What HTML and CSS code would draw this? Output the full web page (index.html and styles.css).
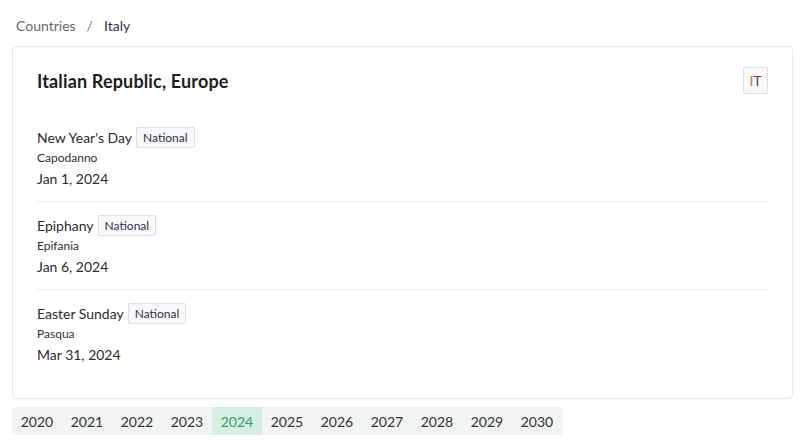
FILE: index.html
```html
<!DOCTYPE html>
<html>
<head>
<meta charset="utf-8">
<link rel="stylesheet" href="styles.css">
</head>
<body>
<div class="page">
  <nav class="crumbs">
    <span class="crumb-link">Countries</span>
    <span class="crumb-sep">/</span>
    <span class="crumb-current">Italy</span>
  </nav>
  <section class="card">
    <header class="card-head">
      <h1 class="title">Italian Republic, Europe</h1>
      <span class="flag"><span class="flag-i">I</span><span class="flag-t">T</span></span>
    </header>
    <ul class="holidays">
      <li class="holiday">
        <div class="name-row"><span class="name">New Year's Day</span><span class="tag">National</span></div>
        <div class="local">Capodanno</div>
        <div class="date">Jan 1, 2024</div>
      </li>
      <li class="holiday">
        <div class="name-row"><span class="name">Epiphany</span><span class="tag">National</span></div>
        <div class="local">Epifania</div>
        <div class="date">Jan 6, 2024</div>
      </li>
      <li class="holiday">
        <div class="name-row"><span class="name">Easter Sunday</span><span class="tag">National</span></div>
        <div class="local">Pasqua</div>
        <div class="date">Mar 31, 2024</div>
      </li>
    </ul>
  </section>
  <div class="years">
    <span class="year">2020</span>
    <span class="year">2021</span>
    <span class="year">2022</span>
    <span class="year">2023</span>
    <span class="year active">2024</span>
    <span class="year">2025</span>
    <span class="year">2026</span>
    <span class="year">2027</span>
    <span class="year">2028</span>
    <span class="year">2029</span>
    <span class="year">2030</span>
  </div>
</div>
</body>
</html>
```

FILE: styles.css
```css
* { box-sizing: border-box; }
body {
  margin: 0;
  background: #fff;
  font-family: Lato, "Noto Sans", sans-serif;
  color: #2a2a2a;
}
.page {
  padding: 14px 13px 0 12px;
}
.crumbs {
  display: flex;
  align-items: center;
  font-size: 14px;
  height: 22px;
  padding-left: 4px;
  margin-bottom: 10px;
}
.crumb-link { color: #666a70; }
.crumb-sep { color: #777; margin: 0 11px; }
.crumb-current { color: #3b2b4b; }
.card {
  border: 1px solid #e8e8ee;
  border-radius: 4px;
  padding: 21px 24px 24px 24px;
  height: 353px;
}
.card-head {
  display: flex;
  justify-content: space-between;
  align-items: center;
  margin-bottom: 32px;
}
.title {
  margin: 0;
  font-size: 18px;
  font-weight: 700;
  color: #1e1e1e;
  line-height: 26px;
  letter-spacing: 0.15px;
}
.flag {
  width: 25px;
  height: 27px;
  border: 1px solid #dedee4;
  border-radius: 2px;
  background: #f9f9fc;
  display: flex;
  align-items: center;
  justify-content: center;
  font-size: 14px;
  margin-top: -1px;
}
.flag-i { color: #c27b2c; }
.flag-t { color: #7a2e4e; }
.holidays {
  list-style: none;
  margin: 0;
  padding: 0;
}
.holiday {
  padding: 0 0 11px 0;
  border-bottom: 1px solid #ececf0;
  margin-bottom: 12px;
}
.holiday:last-child { border-bottom: none; }
.name-row {
  display: flex;
  align-items: center;
  gap: 4px;
  height: 22px;
}
.name {
  font-size: 14px;
  color: #2c2c2c;
}
.tag {
  font-size: 12px;
  line-height: 19px;
  padding: 0 6px;
  border: 1px solid #dedee4;
  border-radius: 2px;
  background: #f9f9fc;
  color: #2e3340;
}
.local {
  font-size: 12px;
  color: #3a2a3a;
  line-height: 20px;
}
.date {
  font-size: 14px;
  color: #2c2c2c;
  line-height: 22px;
}
.years {
  display: flex;
  margin-top: 8px;
  width: 551px;
  height: 28px;
  background: #f2f4f3;
  border-radius: 3px;
  overflow: hidden;
}
.year {
  width: 50px;
  display: flex;
  align-items: center;
  justify-content: center;
  font-size: 14px;
  color: #333;
}
.year.active {
  background: #d5f0e3;
  color: #3a9a5e;
}
```
